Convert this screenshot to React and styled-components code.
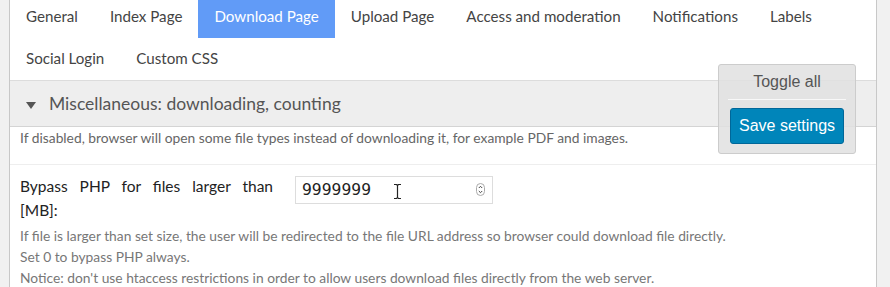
import styled, { createGlobalStyle } from 'styled-components';

const tabs = [
  'General',
  'Index Page',
  'Download Page',
  'Upload Page',
  'Access and moderation',
  'Notifications',
  'Labels',
  'Social Login',
  'Custom CSS',
];

const App = () => {
  return (
    <>
      <GlobalStyle />
      <Page>
        <Panel>
          <Tabs>
            {tabs.map((t) => (
              <Tab key={t} $active={t === 'Download Page'}>{t}</Tab>
            ))}
          </Tabs>

          <SectionHeader>
            <Caret />
            <SectionTitle>Miscellaneous: downloading, counting</SectionTitle>
          </SectionHeader>

          <Description>
            If disabled, browser will open some file types instead of downloading it, for example PDF and images.
          </Description>

          <Field>
            <FieldRow>
              <Label>
                Bypass PHP for files larger than <Unit>[MB]:</Unit>
              </Label>
              <InputWrap>
                <NumberInput defaultValue="9999999" />
                <Spinner>
                  <svg width="9" height="13" viewBox="0 0 9 13">
                    <rect x="0.5" y="0.5" width="8" height="12" rx="4" fill="#fff" stroke="#aaa" />
                    <path d="M2.8 5 L4.5 3.3 L6.2 5" fill="none" stroke="#444" strokeWidth="1" />
                    <path d="M2.8 8 L4.5 9.7 L6.2 8" fill="none" stroke="#444" strokeWidth="1" />
                  </svg>
                </Spinner>
                <Cursor>
                  <svg width="9" height="17" viewBox="0 0 9 17">
                    <path d="M1 1.5 H3.5 L4.5 2.5 L5.5 1.5 H8 M4.5 2.5 V14.5 M1 15.5 H3.5 L4.5 14.5 L5.5 15.5 H8" fill="none" stroke="#fff" strokeWidth="3" />
                    <path d="M1 1.5 H3.5 L4.5 2.5 L5.5 1.5 H8 M4.5 2.5 V14.5 M1 15.5 H3.5 L4.5 14.5 L5.5 15.5 H8" fill="none" stroke="#222" strokeWidth="1.2" />
                  </svg>
                </Cursor>
              </InputWrap>
            </FieldRow>
            <Help>
              If file is larger than set size, the user will be redirected to the file URL address so browser could download file directly.
              <br />
              Set 0 to bypass PHP always.
              <br />
              Notice: don't use htaccess restrictions in order to allow users download files directly from the web server.
            </Help>
          </Field>

          <FloatBox>
            <ToggleAll>Toggle all</ToggleAll>
            <SaveButton>Save settings</SaveButton>
          </FloatBox>
        </Panel>
      </Page>
    </>
  );
};

const GlobalStyle = createGlobalStyle`
  html, body {
    margin: 0;
    padding: 0;
    background: #f1f1f1;
    overflow: hidden;
  }
  * { box-sizing: border-box; }
`;

const Page = styled.div`
  display: flex;
  padding-left: 9px;
  height: 287px;
  overflow: hidden;
`;

const Panel = styled.div`
  position: relative;
  width: 868px;
  background: #fff;
  border-left: 1px solid #c8c8c8;
  border-right: 1px solid #c8c8c8;
  font-family: Lato, "Open Sans", sans-serif;
  color: #444;
`;

const Tabs = styled.div`
  display: flex;
  flex-wrap: wrap;
  margin-top: -4px;
`;

const Tab = styled.div`
  height: 42px;
  padding: 0 16px 3px;
  display: flex;
  align-items: center;
  font-size: 15.15px;
  color: ${(p) => (p.$active ? '#fff' : '#444')};
  background: ${(p) => (p.$active ? '#619bf7' : 'transparent')};
  cursor: pointer;
`;

const SectionHeader = styled.div`
  height: 47px;
  display: flex;
  align-items: center;
  gap: 13px;
  padding-left: 16px;
  background: #eee;
  border-top: 1px solid #dcdcdc;
  border-bottom: 1px solid #d4d4d4;
`;

const Caret = styled.span`
  width: 0;
  height: 0;
  margin-top: 4px;
  border-left: 5px solid transparent;
  border-right: 5px solid transparent;
  border-top: 7px solid #555;
`;

const SectionTitle = styled.h3`
  margin: 0;
  font-size: 17.5px;
  font-weight: 400;
  color: #555;
`;

const Description = styled.div`
  height: 38px;
  padding: 1px 0 0 10px;
  font-size: 13.8px;
  line-height: 20px;
  color: #666;
  border-bottom: 1px solid #eee;
`;

const Field = styled.div`
  padding: 11px 10px 0 10px;
`;

const FieldRow = styled.div`
  display: flex;
  gap: 22px;
  align-items: flex-start;
`;

const Label = styled.div`
  width: 253px;
  margin-top: -2px;
  font-size: 15.5px;
  line-height: 24px;
  color: #222;
  text-align: justify;
`;

const Unit = styled.span`
  display: inline-block;
  width: 100%;
  text-align: left;
`;

const InputWrap = styled.div`
  position: relative;
  width: 198px;
  height: 28px;
`;

const NumberInput = styled.input`
  width: 100%;
  height: 100%;
  border: 1px solid #ddd;
  padding: 0 20px 0 6px;
  font-family: "DejaVu Sans", sans-serif;
  font-size: 15.5px;
  color: #222;
  outline: none;
`;

const Spinner = styled.span`
  position: absolute;
  right: 8px;
  top: 7px;
  display: flex;
`;

const Cursor = styled.span`
  position: absolute;
  left: 98px;
  top: 7px;
  display: flex;
  pointer-events: none;
`;

const Help = styled.div`
  margin-top: 3px;
  font-size: 13.8px;
  line-height: 21px;
  color: #777;
`;

const FloatBox = styled.div`
  position: absolute;
  top: 64px;
  right: 20px;
  width: 138px;
  padding: 8px 9px 9px;
  background: rgba(225, 225, 225, 0.85);
  border: 1px solid #ccc;
  border-radius: 3px;
  display: flex;
  flex-direction: column;
  align-items: center;
  font-family: "Liberation Sans", Arial, sans-serif;
`;

const ToggleAll = styled.div`
  width: 100%;
  padding-bottom: 8px;
  text-align: center;
  font-size: 16px;
  color: #555;
  border-bottom: 1px solid #f8f8f8;
`;

const SaveButton = styled.button`
  margin-top: 8px;
  width: 114px;
  height: 36px;
  background: #0085ba;
  border: 1px solid #006799;
  border-radius: 3px;
  color: #fff;
  font-family: "Liberation Sans", Arial, sans-serif;
  font-size: 16px;
  cursor: pointer;
`;

export default App;
